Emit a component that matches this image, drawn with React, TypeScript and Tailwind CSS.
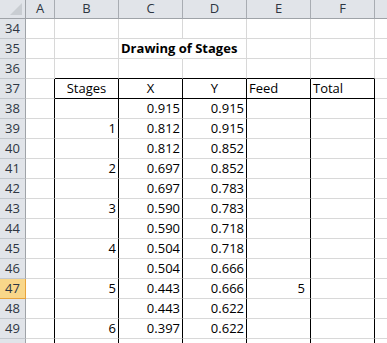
import React from "react";

type CellVal = string;

const cols = ["A", "B", "C", "D", "E", "F", "G"];

const data: Record<number, CellVal[]> = {
  38: ["", "", "0.915", "0.915", "", ""],
  39: ["", "1", "0.812", "0.915", "", ""],
  40: ["", "", "0.812", "0.852", "", ""],
  41: ["", "2", "0.697", "0.852", "", ""],
  42: ["", "", "0.697", "0.783", "", ""],
  43: ["", "3", "0.590", "0.783", "", ""],
  44: ["", "", "0.590", "0.718", "", ""],
  45: ["", "4", "0.504", "0.718", "", ""],
  46: ["", "", "0.504", "0.666", "", ""],
  47: ["", "5", "0.443", "0.666", "5", ""],
  48: ["", "", "0.443", "0.622", "", ""],
  49: ["", "6", "0.397", "0.622", "", ""],
  50: ["", "", "", "", "", ""],
};

const rows = [34, 35, 36, 37, 38, 39, 40, 41, 42, 43, 44, 45, 46, 47, 48, 49, 50];

function cellClasses(row: number, col: number): string {
  // col: 1=A ... 7=G
  const blackRight = row >= 37 && col >= 1 && col <= 6;
  const blackBottom = (row === 36 || row === 37) && col >= 2 && col <= 6;
  const hideRight = row === 35 && col === 3;
  const r = blackRight
    ? "border-r-black"
    : hideRight
    ? "border-r-transparent"
    : "border-r-[#d8d8d8]";
  const b = blackBottom ? "border-b-black" : "border-b-[#d8d8d8]";
  return `border-r border-b ${r} ${b}`;
}

function Cell({ row, col }: { row: number; col: number }) {
  let content: React.ReactNode = null;
  let align = "justify-end pr-[2px]";
  if (row === 35 && col === 3) {
    content = (
      <span className="font-bold whitespace-nowrap relative z-10 text-[13px]">Drawing of Stages</span>
    );
    align = "justify-start pl-[2px]";
  } else if (row === 37) {
    const hdr: Record<number, [string, string]> = {
      2: ["Stages", "justify-center"],
      3: ["X", "justify-center"],
      4: ["Y", "justify-center"],
      5: ["Feed", "justify-start pl-[2px]"],
      6: ["Total", "justify-start pl-[2px]"],
    };
    if (hdr[col]) {
      content = hdr[col][0];
      align = hdr[col][1];
    }
  } else if (data[row] && col <= 6) {
    content = data[row][col - 1] || null;
    if (row === 47 && col === 5) align = "justify-end pr-[5px]";
  }
  return (
    <div
      className={`flex items-end pb-[1px] overflow-visible text-[13px] leading-[17px] text-black ${align} ${cellClasses(
        row,
        col
      )}`}
    >
      {content}
    </div>
  );
}

export default function App() {
  return (
    <div
      className="w-[387px] h-[343px] overflow-hidden bg-white"
      style={{ fontFamily: '"Open Sans", "Liberation Sans", sans-serif' }}
    >
      <div className="grid grid-cols-[26px_29px_64px_64px_64px_64px_64px_64px] grid-rows-[19px_repeat(17,20px)] w-[439px]">
        {/* corner */}
        <div className="relative bg-[#e1e4e9] border-r border-b border-r-[#9fa3a8] border-b-[#9fa3a8]">
          <div className="absolute right-[3px] bottom-[3px] w-0 h-0 border-l-[12px] border-l-transparent border-b-[12px] border-b-[#c9cdd2]" />
        </div>
        {cols.map((c) => (
          <div
            key={c}
            className="flex items-center justify-center bg-[#e1e4e9] border-r border-b border-r-[#a8acb2] border-b-[#9fa3a8] text-[13px] text-[#2e3642]"
          >
            {c}
          </div>
        ))}
        {rows.map((r) => (
          <React.Fragment key={r}>
            <div
              className={
                r === 47
                  ? "flex items-end pb-[1px] justify-center bg-[#f9d78a] border-r border-b border-r-[#e8a33c] border-b-[#e8a33c] text-[13px] leading-[17px] text-[#2e3642]"
                  : "flex items-end pb-[1px] justify-center bg-[#e1e4e9] border-r border-b border-r-[#9fa3a8] border-b-[#c3c7cc] text-[13px] leading-[17px] text-[#2e3642]"
              }
            >
              {r}
            </div>
            {cols.map((c, i) => (
              <Cell key={c} row={r} col={i + 1} />
            ))}
          </React.Fragment>
        ))}
      </div>
    </div>
  );
}
